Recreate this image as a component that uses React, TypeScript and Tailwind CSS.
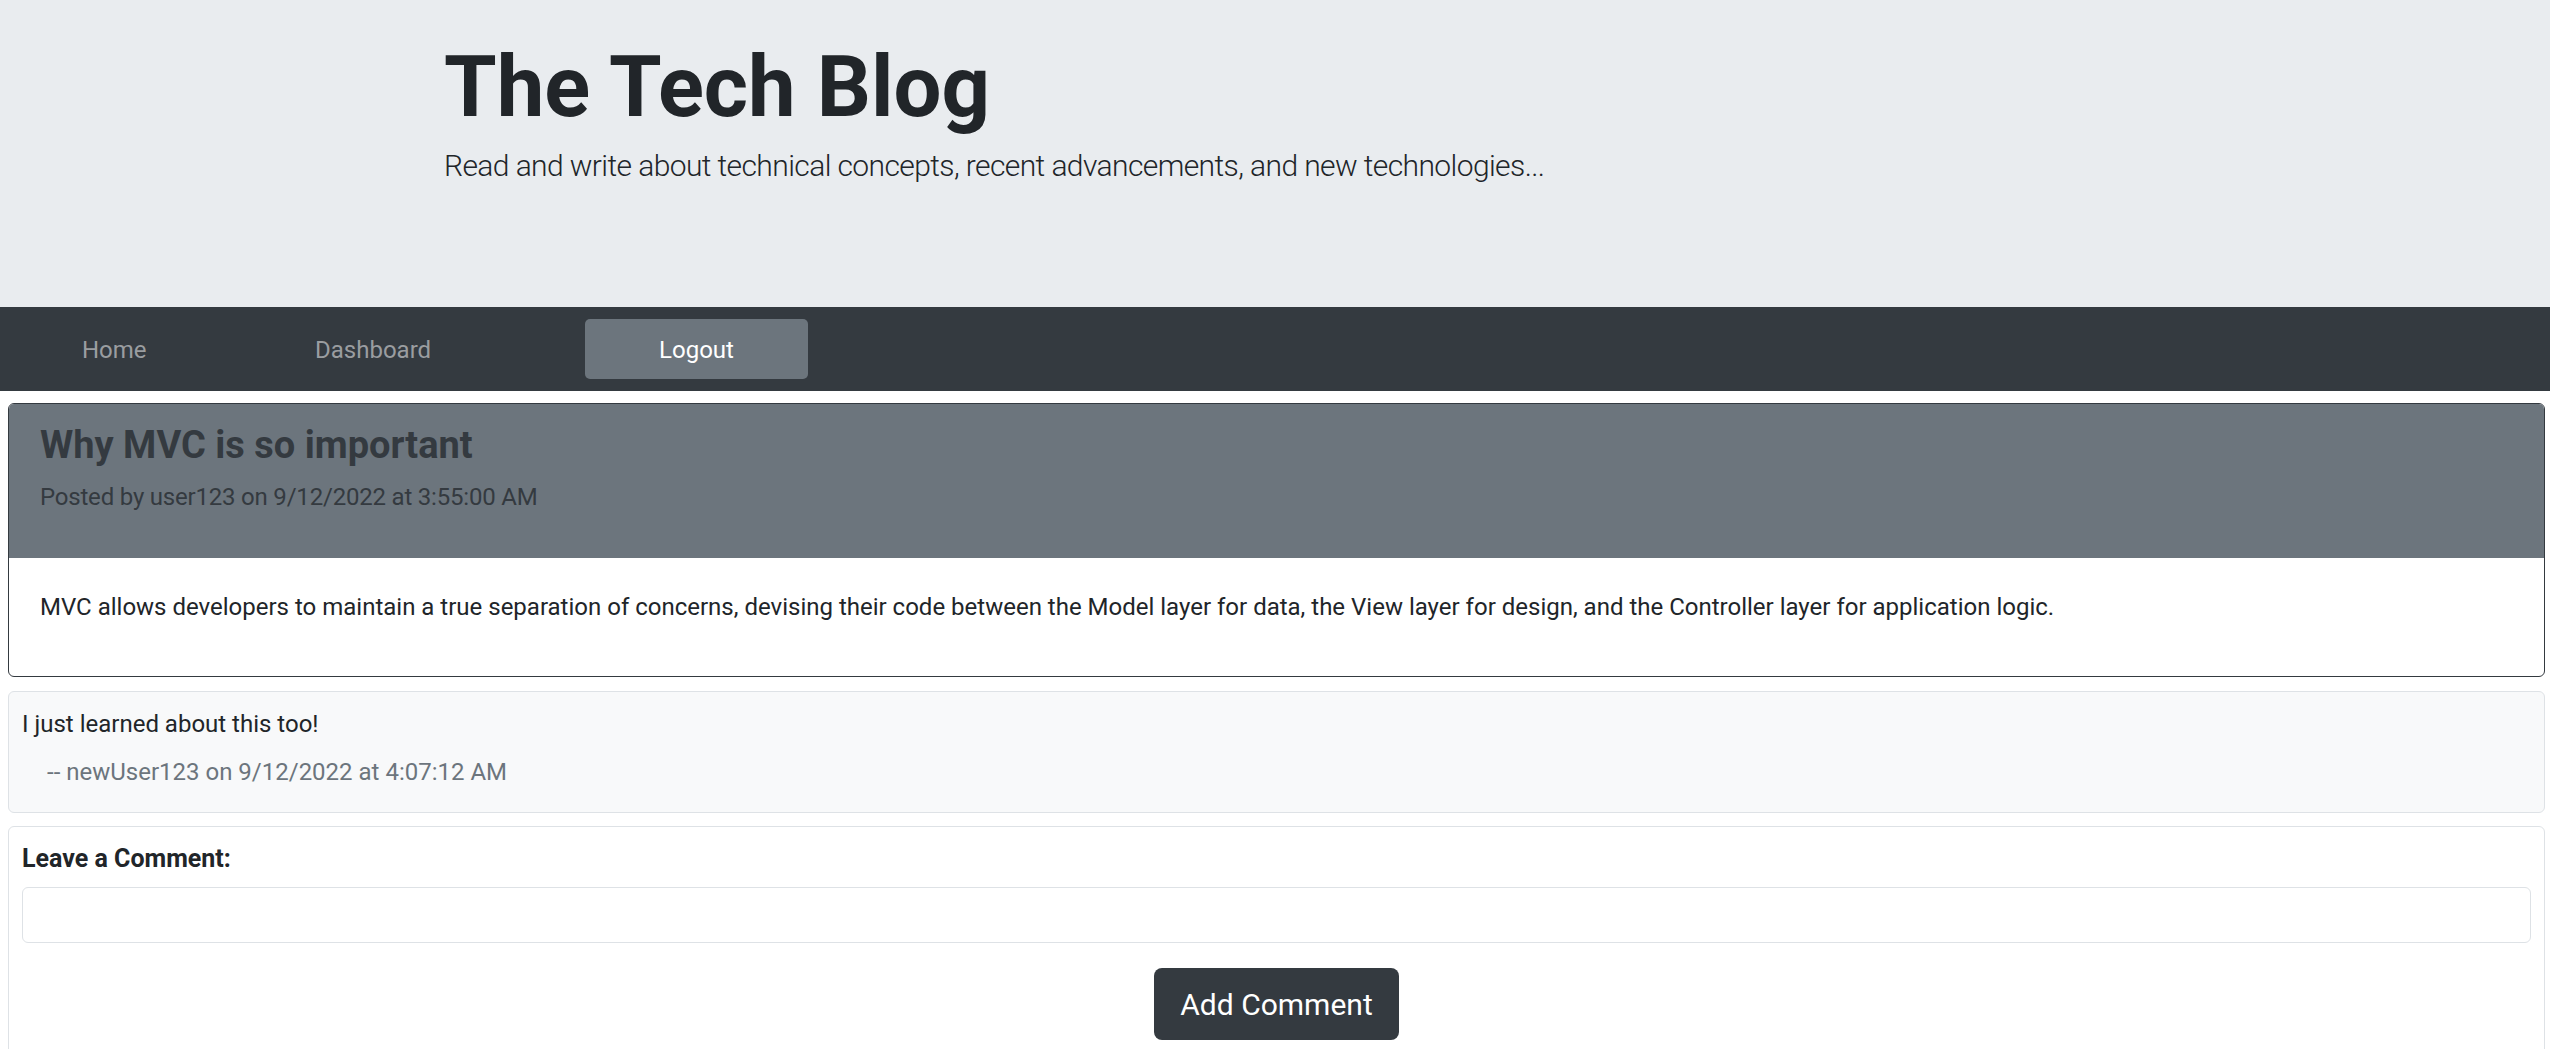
import React from "react";

const font = "font-['Segoe_UI',Roboto,'Helvetica_Neue',Arial,sans-serif]";

function Header() {
  return (
    <header className="h-[307px] bg-[#e9ecef] pl-[444px] pt-[36px]">
      <h1 className="text-[85px] font-bold leading-[1.2] text-[#212529]">The Tech Blog</h1>
      <p className="mt-[4px] text-[30px] font-light leading-[48px] tracking-[-0.6px] text-[#212529]">
        Read and write about technical concepts, recent advancements, and new technologies...
      </p>
    </header>
  );
}

function Nav() {
  return (
    <nav className="flex h-[84px] items-center bg-[#343a40] pl-[82px] text-[24px]">
      <a className="w-[233px] pt-[2px] text-[#9a9da0]">Home</a>
      <a className="w-[270px] pt-[2px] text-[#9a9da0]">Dashboard</a>
      <a className="flex h-[60px] w-[223px] items-center justify-center rounded-[5px] bg-[#6c757d] pt-[2px] text-white">
        Logout
      </a>
    </nav>
  );
}

function Post() {
  return (
    <div className="ml-[8px] mr-[5px] mt-[12px] overflow-hidden rounded-[6px] border-[1.5px] border-[#343a40] bg-white">
      <div className="bg-[#6c757d] px-[31px] pb-[41px] pt-[19px] text-[#343a40]">
        <h4 className="mb-[9px] text-[38px] font-bold leading-[1.2]">Why MVC is so important</h4>
        <p className="text-[24px] leading-[39px] tracking-[-0.2px]">Posted by user123 on 9/12/2022 at 3:55:00 AM</p>
      </div>
      <div className="px-[31px] pb-[49px] pt-[30px] text-[24px] leading-[39px] text-[#212529]">
        MVC allows developers to maintain a true separation of concerns, devising their code between the Model layer
        for data, the View layer for design, and the Controller layer for application logic.
      </div>
    </div>
  );
}

function Comment() {
  return (
    <div className="ml-[8px] mr-[5px] mt-[14px] rounded-[6px] border-[1.5px] border-[#dee2e6] bg-[#f8f9fa] px-[13px] pb-[20px] pt-[13px] text-[24px] leading-[39px]">
      <p className="text-[#212529]">I just learned about this too!</p>
      <p className="mt-[9px] pl-[25px] text-[#6c757d]">-- newUser123 on 9/12/2022 at 4:07:12 AM</p>
    </div>
  );
}

function CommentForm() {
  return (
    <form className="ml-[8px] mr-[5px] mt-[13px] rounded-[6px] border-[1.5px] border-[#dee2e6] bg-white px-[13px] pb-[30px] pt-[13px]">
      <label className="block text-[25px] font-bold leading-[1.5] text-[#212529]">Leave a Comment:</label>
      <input
        type="text"
        className="mt-[10px] block h-[56px] w-full rounded-[6px] border-[1.5px] border-[#dee2e6] bg-white px-[20px] text-[24px] outline-none"
      />
      <div className="mt-[25px] flex justify-center">
        <button
          type="button"
          className="h-[72px] w-[245px] rounded-[8px] bg-[#343a40] pt-[2px] text-[30px] leading-none text-white"
        >
          Add Comment
        </button>
      </div>
    </form>
  );
}

export default function App() {
  return (
    <div className={`${font} min-h-screen bg-white`}>
      <Header />
      <Nav />
      <main>
        <Post />
        <Comment />
        <CommentForm />
      </main>
    </div>
  );
}
